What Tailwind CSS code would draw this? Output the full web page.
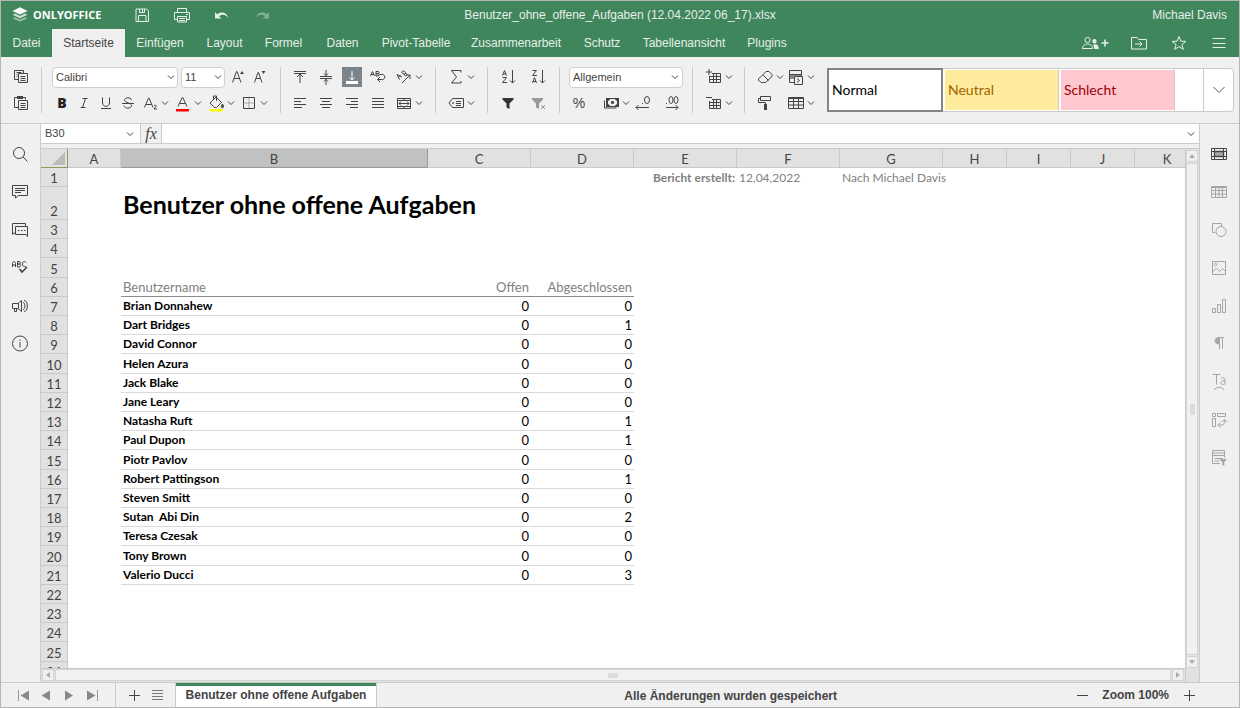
<!DOCTYPE html>
<html lang="de">
<head>
  <meta charset="UTF-8">
  <meta name="viewport" content="width=device-width, initial-scale=1">
  <title>Benutzer_ohne_offene_Aufgaben (12.04.2022 06_17).xlsx</title>
  <script src="https://cdn.jsdelivr.net/npm/@tailwindcss/browser@4"></script>
</head>
<body class="h-screen flex flex-col overflow-hidden border border-[#b5b5b5] bg-[#f0f0f0] text-[#444] text-xs font-['Liberation_Sans',Arial,sans-serif]">

  <!-- Header -->
  <header class="shrink-0 bg-[#40865c] text-[#e6efe9]">
    <div class="grid grid-cols-[1fr_auto_1fr] items-center h-7">
      <div class="flex items-center">
        <div class="flex items-center gap-[3px] w-[131px] pl-[9px] text-[11px] font-['Open_Sans',sans-serif] font-bold text-white">
          <svg class="w-5 h-5" viewBox="0 0 20 20">
            <path d="M2.500 13.300 5 12.200 10 14.500 15 12.200 17.500 13.300 10 16.800z" fill="#fff" opacity=".45"/>
            <path d="M2.500 9.700 5 8.600 10 10.900 15 8.600 17.500 9.700 10 13.200z" fill="#fff" opacity=".75"/>
            <path d="M10 2.300 17.500 5.900 10 9.500 2.500 5.900z" fill="#fff"/>
          </svg>
          <span>ONLYOFFICE</span>
        </div>
        <div class="flex gap-5">
          <button data-icon="save" aria-label="Speichern" class="w-5 h-5"></button>
          <button data-icon="print" aria-label="Drucken" class="w-5 h-5"></button>
          <button data-icon="undo" aria-label="Rückgängig" class="w-5 h-5"></button>
          <button data-icon="redo" aria-label="Wiederholen" class="w-5 h-5 opacity-40"></button>
        </div>
      </div>
      <h1>Benutzer_ohne_offene_Aufgaben (12.04.2022 06_17).xlsx</h1>
      <div class="text-right pr-3">Michael Davis</div>
    </div>
    <div class="flex justify-between h-7">
      <nav class="flex whitespace-nowrap">
        <button class="w-[51px]">Datei</button>
        <button class="w-[73px] bg-[#f0f0f0] text-[#444]">Startseite</button>
        <button class="w-[70px]">Einfügen</button>
        <button class="w-[59px]">Layout</button>
        <button class="w-[59px]">Formel</button>
        <button class="w-[59px]">Daten</button>
        <button class="w-[88px]">Pivot-Tabelle</button>
        <button class="w-[112px]">Zusammenarbeit</button>
        <button class="w-[60px]">Schutz</button>
        <button class="w-[104px]">Tabellenansicht</button>
        <button class="w-[62px]">Plugins</button>
      </nav>
      <div class="flex items-center gap-5 pr-[10px]">
        <button data-icon="share" aria-label="Freigeben" class="w-7 h-5"></button>
        <button data-icon="folder" aria-label="Dateispeicherort öffnen" class="w-5 h-5"></button>
        <button data-icon="star" aria-label="Favorit" class="w-5 h-5"></button>
        <button data-icon="menu" aria-label="Ansichtseinstellungen" class="w-5 h-5"></button>
      </div>
    </div>
  </header>

  <!-- Toolbar -->
  <div class="shrink-0 flex py-[10px] h-[67px] border-b border-[#cbcbcb]">
    <div class="flex flex-col gap-[6px] items-center w-10 shrink-0">
      <button data-icon="copy" aria-label="Kopieren" class="w-5 h-5"></button>
      <button data-icon="paste" aria-label="Einfügen" class="w-5 h-5"></button>
    </div>
    <div class="flex flex-col gap-[5px] w-[239px] pl-[10px] shrink-0 border-l border-[#cbcbcb]">
      <div class="flex gap-[3px]">
        <div class="relative w-[126px]">
          <select aria-label="Schriftart" class="appearance-none w-full h-[21px] pl-[3px] text-[11px] bg-white border border-[#cfcfcf] rounded-sm"><option>Calibri</option></select>
          <span data-icon="chevron" class="absolute right-[2px] top-0 w-[10px] h-5 pointer-events-none"></span>
        </div>
        <div class="relative w-11">
          <select aria-label="Schriftgrad" class="appearance-none w-full h-[21px] pl-[3px] text-[11px] bg-white border border-[#cfcfcf] rounded-sm"><option>11</option></select>
          <span data-icon="chevron" class="absolute right-[2px] top-0 w-[10px] h-5 pointer-events-none"></span>
        </div>
        <button data-icon="grow" aria-label="Schrift vergrößern" class="w-5 h-5"></button>
        <button data-icon="shrink" aria-label="Schrift verkleinern" class="w-5 h-5"></button>
      </div>
      <div class="flex gap-[3px]">
        <div class="flex gap-[2px]">
          <button aria-label="Fett" class="w-5 h-5 font-['Open_Sans',sans-serif] font-extrabold text-sm leading-5 text-[#222]">B</button>
          <button data-icon="italic" aria-label="Kursiv" class="w-5 h-5"></button>
          <button data-icon="underline" aria-label="Unterstrichen" class="w-5 h-5"></button>
          <button data-icon="strike" aria-label="Durchgestrichen" class="w-5 h-5"></button>
          <button data-icon="subscript" data-menu aria-label="Tiefgestellt" class="flex h-5"></button>
        </div>
        <button data-icon="fontcolor" data-menu aria-label="Schriftfarbe" class="flex h-5"></button>
        <button data-icon="fill" data-menu aria-label="Füllfarbe" class="flex h-5"></button>
        <button data-icon="borders" data-menu aria-label="Rahmen" class="flex h-5"></button>
      </div>
    </div>
    <div class="flex flex-col gap-[6px] w-[155px] pl-[9px] shrink-0 border-l border-[#cbcbcb]">
      <div class="flex gap-[6px]">
        <button data-icon="top" aria-label="Oben ausrichten" class="w-5 h-5"></button>
        <button data-icon="middle" aria-label="Zentriert ausrichten" class="w-5 h-5"></button>
        <button data-icon="bottom" aria-label="Unten ausrichten" class="w-5 h-5 bg-[#7d858c] text-white"></button>
        <button data-icon="wrap" aria-label="Textumbruch" class="w-5 h-5"></button>
        <button data-icon="orient" data-menu aria-label="Ausrichtung" class="flex h-5"></button>
      </div>
      <div class="flex gap-[6px]">
        <button data-icon="left" aria-label="Linksbündig" class="w-5 h-5"></button>
        <button data-icon="center" aria-label="Zentriert" class="w-5 h-5"></button>
        <button data-icon="right" aria-label="Rechtsbündig" class="w-5 h-5"></button>
        <button data-icon="justify" aria-label="Blocksatz" class="w-5 h-5"></button>
        <button data-icon="merge" data-menu aria-label="Verbinden und zentrieren" class="flex h-5"></button>
      </div>
    </div>
    <div class="flex flex-col gap-[6px] w-[52px] pl-[10px] shrink-0 border-l border-[#cbcbcb]">
      <button data-icon="sum" data-menu aria-label="Summe" class="flex h-5"></button>
      <button data-icon="named" data-menu aria-label="Benannte Bereiche" class="flex h-5"></button>
    </div>
    <div class="grid grid-cols-[20px_20px] content-start gap-x-[10px] gap-y-[6px] w-[72px] pl-[10px] shrink-0 border-l border-[#cbcbcb]">
      <button data-icon="az" aria-label="Aufsteigend sortieren" class="w-5 h-5"></button>
      <button data-icon="za" aria-label="Absteigend sortieren" class="w-5 h-5"></button>
      <button data-icon="filter" aria-label="Filter" class="w-5 h-5"></button>
      <button data-icon="clearfilter" aria-label="Filter löschen" class="w-5 h-5 opacity-50"></button>
    </div>
    <div class="flex flex-col gap-[5px] w-[133px] pl-[9px] shrink-0 border-l border-[#cbcbcb]">
      <div class="relative w-[114px]">
        <select aria-label="Zahlenformat" class="appearance-none w-full h-[21px] pl-[3px] text-[11px] bg-white border border-[#cfcfcf] rounded-sm"><option>Allgemein</option></select>
        <span data-icon="chevron" class="absolute right-[3px] top-0 w-[10px] h-5 pointer-events-none"></span>
      </div>
      <div class="flex">
        <button aria-label="Prozent" class="w-8 h-5 pr-3 text-sm leading-5">%</button>
        <button data-icon="money" data-menu aria-label="Währung" class="flex h-5 mr-[2px]"></button>
        <button data-icon="decless" aria-label="Dezimale verringern" class="w-5 h-5 mr-[9px]"></button>
        <button data-icon="decmore" aria-label="Dezimale erhöhen" class="w-5 h-5"></button>
      </div>
    </div>
    <div class="flex flex-col gap-[6px] w-[52px] pl-[11px] shrink-0 border-l border-[#cbcbcb]">
      <button data-icon="addcell" data-menu aria-label="Zellen einfügen" class="flex h-5"></button>
      <button data-icon="delcell" data-menu aria-label="Zellen löschen" class="flex h-5"></button>
    </div>
    <div class="grid grid-cols-[30px_30px] content-start gap-x-[1px] gap-y-[6px] w-[83px] pl-[10px] shrink-0 border-l border-[#cbcbcb]">
      <button data-icon="eraser" data-menu aria-label="Löschen" class="flex h-5"></button>
      <button data-icon="condformat" data-menu aria-label="Bedingte Formatierung" class="flex h-5"></button>
      <button data-icon="painter" aria-label="Format übertragen" class="w-5 h-5"></button>
      <button data-icon="tablefmt" data-menu aria-label="Als Tabelle formatieren" class="flex h-5"></button>
    </div>
    <div class="flex flex-1 min-w-0 h-11 mt-px mr-[5px] bg-white border border-[#cbcbcb] rounded-sm font-['Lato',sans-serif] text-sm">
      <button class="w-[116px] shrink-0 -m-px mr-0 border-2 border-[#848484] pl-[3px] text-left text-black">Normal</button>
      <button class="w-[116px] shrink-0 border border-l-2 border-white border-r-[#cbcbcb] bg-[#ffeb9c] bg-clip-padding pl-[3px] text-left text-[#9c6500]">Neutral</button>
      <button class="w-[116px] shrink-0 border border-l-2 border-white border-r-[#cbcbcb] bg-[#ffc7ce] bg-clip-padding pl-[3px] text-left text-[#9c0006]">Schlecht</button>
      <div class="flex-1"></div>
      <button aria-label="Weitere Formatvorlagen" class="w-[30px] border-l border-[#cbcbcb] flex items-center justify-center">
        <svg class="w-3 h-2 fill-none stroke-[#555]" viewBox="0 0 12 8"><path d="M.5 1 6 6.500 11.500 1"/></svg>
      </button>
    </div>
  </div>

  <div class="flex flex-1 min-h-0">
    <!-- Left panel -->
    <aside class="w-10 shrink-0 flex flex-col items-center pt-[11px] pr-px border-r border-[#cbcbcb]">
      <button data-icon="search" aria-label="Suchen" class="w-5 h-[38px]"></button>
      <button data-icon="comment" aria-label="Kommentare" class="w-5 h-[38px]"></button>
      <button data-icon="chat" aria-label="Chat" class="w-5 h-[38px]"></button>
      <button data-icon="spell" aria-label="Rechtschreibprüfung" class="w-5 h-[38px]"></button>
      <button data-icon="feedback" aria-label="Feedback und Support" class="w-5 h-[38px]"></button>
      <button data-icon="info" aria-label="Über das Produkt" class="w-5 h-[38px]"></button>
    </aside>

    <main class="flex-1 min-w-0 flex flex-col">
      <!-- Formula bar -->
      <div class="flex h-5 shrink-0 bg-white border-b border-[#cbcbcb] text-[11px]">
        <input aria-label="Namenfeld" value="B30" class="w-[84px] pl-1 outline-none">
        <button data-icon="chevron" aria-label="Namen auswählen" class="w-[10px] mr-[5px]"></button>
        <button aria-label="Funktion einfügen" class="w-[22px] bg-[#f0f0f0] border-x border-[#cbcbcb] font-['Liberation_Serif',serif] italic text-base leading-4">fx</button>
        <input aria-label="Formel" class="flex-1 min-w-0 outline-none">
        <button data-icon="chevron" aria-label="Formelleiste erweitern" class="w-[10px] mr-[3px]"></button>
      </div>

      <div class="flex flex-1 min-h-0 mt-1 border-t border-[#cbcbcb]">
        <div class="flex-1 min-w-0 flex flex-col">
          <!-- Sheet -->
          <div class="flex-1 min-h-0 overflow-hidden bg-white">
            <table class="table-fixed w-[1159px] border-separate border-spacing-0 font-['Lato','Noto_Sans',sans-serif] text-[13px] leading-4 text-black">
              <thead>
                <tr id="columns" class="h-[19px] text-[#444]"></tr>
              </thead>
              <tbody id="rows"></tbody>
            </table>
          </div>
          <!-- Horizontal scrollbar -->
          <div class="flex h-[14px] shrink-0 border-t border-[#cbcbcb] bg-[#e1e1e1] pl-px gap-px">
            <button aria-label="Nach links" class="w-3 h-3 bg-[#f0f0f0] border border-[#d4d4d4] flex items-center justify-center"><svg class="w-1 h-[6px] fill-[#aaa]" viewBox="0 0 4 6"><path d="M4 0v6L0 3z"/></svg></button>
            <div class="flex-1 h-3 bg-[#f1f1f1] border border-[#d4d4d4] flex items-center justify-center"><span class="w-[10px] h-[5px] bg-[#dcdcdc]"></span></div>
            <button aria-label="Nach rechts" class="w-3 h-3 bg-[#f0f0f0] border border-[#d4d4d4] flex items-center justify-center mr-px"><svg class="w-1 h-[6px] fill-[#aaa]" viewBox="0 0 4 6"><path d="M0 0v6l4-3z"/></svg></button>
          </div>
        </div>
        <!-- Vertical scrollbar -->
        <div class="flex flex-col w-[14px] shrink-0 border-l border-[#cbcbcb] bg-[#e1e1e1] pt-px pb-[14px] gap-px">
          <button aria-label="Nach oben" class="w-3 h-3 bg-[#f0f0f0] border border-[#d4d4d4] flex items-center justify-center"><svg class="w-[6px] h-1 fill-[#aaa]" viewBox="0 0 6 4"><path d="M0 4h6L3 0z"/></svg></button>
          <div class="flex-1 w-3 bg-[#f1f1f1] border border-[#d4d4d4] flex items-center justify-center"><span class="w-[5px] h-[11px] bg-[#dcdcdc]"></span></div>
          <button aria-label="Nach unten" class="w-3 h-3 bg-[#f0f0f0] border border-[#d4d4d4] flex items-center justify-center"><svg class="w-[6px] h-1 fill-[#aaa]" viewBox="0 0 6 4"><path d="M0 0h6L3 4z"/></svg></button>
        </div>
      </div>
    </main>

    <!-- Right panel -->
    <aside class="w-10 shrink-0 flex flex-col items-center pt-[11px] pr-px border-l border-[#cbcbcb] text-[#a5a5a5]">
      <button data-icon="cell" aria-label="Zelleneinstellungen" class="w-5 h-[38px] text-[#444]"></button>
      <button data-icon="table" aria-label="Tabelleneinstellungen" class="w-5 h-[38px]"></button>
      <button data-icon="shape" aria-label="Formeinstellungen" class="w-5 h-[38px]"></button>
      <button data-icon="image" aria-label="Bildeinstellungen" class="w-5 h-[38px]"></button>
      <button data-icon="chart" aria-label="Diagrammeinstellungen" class="w-5 h-[38px]"></button>
      <button data-icon="paragraph" aria-label="Absatzeinstellungen" class="w-5 h-[38px]"></button>
      <button data-icon="textart" aria-label="TextArt-Einstellungen" class="w-5 h-[38px]"></button>
      <button data-icon="pivot" aria-label="Pivot-Tabelleneinstellungen" class="w-5 h-[38px]"></button>
      <button data-icon="slicer" aria-label="Datenschnitteinstellungen" class="w-5 h-[38px]"></button>
    </aside>
  </div>

  <!-- Status bar -->
  <footer class="shrink-0 flex h-[25px] border-t border-[#cbcbcb] font-bold">
    <div class="flex items-center gap-[3px] w-[115px] pl-3 border-r border-[#cbcbcb]">
      <button data-icon="first" aria-label="Erstes Blatt" class="w-5 h-5"></button>
      <button data-icon="prev" aria-label="Vorheriges Blatt" class="w-5 h-5"></button>
      <button data-icon="next" aria-label="Nächstes Blatt" class="w-5 h-5"></button>
      <button data-icon="last" aria-label="Letztes Blatt" class="w-5 h-5"></button>
    </div>
    <div class="flex items-center gap-[3px] pl-2 pr-2">
      <button data-icon="plus" aria-label="Blatt hinzufügen" class="w-5 h-5"></button>
      <button data-icon="list" aria-label="Liste der Blätter" class="w-5 h-5"></button>
    </div>
    <button class="w-[202px] bg-white border-x border-[#cbcbcb] shadow-[inset_0_3px_#40865c] font-bold">Benutzer ohne offene Aufgaben</button>
    <div class="flex-1 flex items-center justify-center pt-px pl-3">Alle Änderungen wurden gespeichert</div>
    <div class="flex items-center gap-[10px] pr-10">
      <button data-icon="minus" aria-label="Verkleinern" class="w-5 h-5"></button>
      <span>Zoom 100%</span>
      <button data-icon="plus" aria-label="Vergrößern" class="w-5 h-5"></button>
    </div>
  </footer>

  <script>
    // 20x20 drawings, stroked with the current text colour
    const icons = {
      chevron: '<path d="m7 8.500 3 3 3-3"/>',
      save: '<path d="M4 4h10.500L16.500 6v10.500H4zM6.500 16.500v-6h7.500v6M7.500 4v3.500h5V4M10.500 4v3"/>',
      print: '<path d="M5.500 7.500v-4h9v4M5.500 14.500h-3v-7h15v7h-3M5.500 11.500h9v5.500h-9zM7 13.500h6M7 15.500h6M14 9.500h2"/>',
      undo: '<path d="M3 7v6.500h6.500L7 11.200C9.500 8.800 13.500 9 16.500 13 15 7.500 9.500 5.800 5.200 9.200z" fill="currentColor" stroke="none"/>',
      redo: '<path d="M17 7v6.500h-6.500L13 11.200C10.500 8.800 6.500 9 3.500 13 5 7.500 10.500 5.800 14.800 9.200z" fill="currentColor" stroke="none"/>',
      share: '<circle cx="6.500" cy="7" r="2.600"/><path d="M1.500 15.500c0-6 10-6 10 0z"/><path d="M13 16c0-2 0-3-1.200-4 3-1.600 6-.5 6 4zM13.500 6a2.200 2.200 0 1 1 0 4.400 2.200 2.200 0 0 1 0-4.400z" fill="currentColor" stroke="none"/><path d="M20.500 10h7M24 6.500v7" stroke-width="1.600"/>',
      folder: '<path d="M2.500 16V4.500H8l1.500 2h8V16zM6 11h7M10.500 8.500 13 11l-2.500 2.500"/>',
      star: '<path d="m10 3.500 1.800 4.700 5 .2-3.900 3.100 1.400 4.900-4.300-2.800-4.300 2.800 1.400-4.900-3.900-3.100 5-.2z"/>',
      menu: '<path d="M3.500 5.500h13M3.500 10.500h13M3.500 14.500h13"/>',
      copy: '<path d="M7.500 12.500h-4v-9h9v3M5.500 5.500h5M5.500 7.500h1M5.500 9.500h1M7.500 6.500h9v9h-9zM9.500 9.500h5M9.500 11.500h5M9.500 13.500h5"/>',
      paste: '<path d="M7.500 14.500h-4v-10h11v2M6.500 3.500h5" /><path d="M6 3h6v3H6z" fill="currentColor" stroke="none"/><path d="M7.500 7.500h9v9h-9zM9.500 10.500h5M9.500 12.500h5M9.500 14.500h5"/>',
      grow: '<path d="m4.500 15.500 4-11h.5l4 11M6 11.500h5.500"/><path d="M12 7l2-3 2 3z" fill="currentColor" stroke="none"/>',
      shrink: '<path d="m3.500 15.500 3.500-10h.5l3.500 10M5 11.500h5"/><path d="M10.500 4l2 3 2-3z" fill="currentColor" stroke="none"/>',
      italic: '<path d="M8.500 5.500h5M6.500 14.500h5M11.500 5.500l-3 9"/>',
      underline: '<path d="M6.500 4.500V10c0 4.500 7 4.500 7 0V4.500M5 15.500h10"/>',
      strike: '<path d="M13.500 7c-.5-3-7-3-7 .3 0 2.200 7 2.700 7 5.200 0 3.500-7 3.500-7.500.2M4 10.500h12"/>',
      subscript: '<path d="m4.500 14.500 4-9.500h.5l4 9.500M6 11.500h5.500M14 13c.5-1.500 2.500-1 2 .5l-2 2.500h3"/>',
      fontcolor: '<path d="m5 13.500 4.300-9h.5l4.200 9M6.500 10.500h6"/><path d="M3 16h13v2.500H3z" fill="#f00" stroke="none"/>',
      fill: '<path d="m4 10 6-6 5.500 5.500-5 5h-2zM7.500 6.500V3h3v5"/><path d="M16.500 11c2 2.500 0 4 0 4-2.500-1 0-4 0-4z" fill="currentColor"/><path d="M4 16h13v2.500H4z" fill="#ff0" stroke="none"/>',
      borders: '<path d="M4.500 4.500h11v11h-11z"/><path d="M10 5v10M5 10h10" opacity=".4"/>',
      top: '<path d="M4 4.500h12M4 6.500h12M10 7v9M7 10l3-3 3 3"/>',
      middle: '<path d="M4 9.500h12M4 11.500h12M10 3v6M8 6.500l2 2 2-2M10 18v-6M8 14.500l2-2 2 2"/>',
      bottom: '<path d="M10 4v9M7.500 10.500 10 13l2.500-2.500M4 14.500h12M4 16.500h12M4 15.500h12"/>',
      wrap: '<path d="M2.500 9 4.500 4.500 6.500 9M3.300 7.500h2.500M8 4.500V9h2c1.700 0 1.700-2.300 0-2.300H8h2c1.500 0 1.500-2.200 0-2.200zM12 7.500h2.500c3 0 3 5 0 5H9.500M12 10l-2.500 2.500L12 15"/>',
      orient: '<path d="m5.500 12.500-2.500-5 5 2.500M4.500 10.500l2-2M7.500 5l4 4c2-.5 2-2.500 0-2.500.5-2-2-3.500-4-1.500zM9.500 7l2-.5M8 16l8-8M12 8h4v4"/>',
      left: '<path d="M4 5.500h12M4 8.500h7M4 11.500h12M4 14.500h8"/>',
      center: '<path d="M4 5.500h12M6 8.500h8M4 11.500h12M6 14.500h8"/>',
      right: '<path d="M4 5.500h12M9 8.500h7M4 11.500h12M8 14.500h8"/>',
      justify: '<path d="M4 5.500h12M4 8.500h12M4 11.500h12M4 14.500h12"/>',
      merge: '<path d="M3.500 5.500h13v10h-13zM3.500 7.500h13M3.500 13.500h13M10 5v2M10 13.500v2M5 10.500h10M7 8.500l-2 2 2 2M13 8.500l2 2-2 2"/>',
      sum: '<path d="M15 5.500v-2H5.500l5 6.500-5 6H15v-2"/>',
      named: '<path d="M6.500 5.500h11v9h-11L3 10zM10 8.500h5M10 10.500h5M10 12.500h5"/><circle cx="7" cy="10" r=".5"/>',
      az: '<path d="M4.500 8.500 6.500 3.500 8.500 8.500M5 7h3M4.500 10.500h4l-4 5h4.500M14.500 3v13M12 13.500l2.500 2.500 2.500-2.500"/>',
      za: '<path d="M4.500 3.500h4l-4 5h4.500M4.500 16 6.500 10.500 8.500 16M5 14.500h3M14.500 3v13M12 13.500l2.500 2.500 2.500-2.500"/>',
      filter: '<path d="M4.500 5h11v1.500l-4 4V16l-3-1.500v-4l-4-4z" fill="#333" stroke="none"/>',
      clearfilter: '<path d="M4 5h11v1.500l-4 4V16l-3-1.500v-4l-4-4z" fill="currentColor" stroke="none"/><path d="m13 12 4 4M17 12l-4 4"/>',
      money: '<path d="M5.500 5.500h12v8h-12zM3.500 7.500v7.500h12"/><path d="M5 5h4v1.500L7 8v3L9 12.500V14H5zM18 5h-4v1.500L16 8v3L14 12.500V14h4z" fill="currentColor" stroke="none"/><circle cx="11.500" cy="9.500" r="1.200" fill="currentColor"/>',
      decless: '<ellipse cx="14" cy="7" rx="2.500" ry="3.500"/><path d="M9 10.500h1M3 14.500h13M5.500 12 3 14.500 5.500 17"/>',
      decmore: '<ellipse cx="9" cy="7" rx="2" ry="3.500"/><ellipse cx="14" cy="7" rx="2" ry="3.500"/><path d="M4 10.500h1M4 14.500h12M13.500 12l2.500 2.500-2.500 2.500"/>',
      addcell: '<path d="M5 2v6M2 5h6M8 6.500h8.500v9h-11V9M5.500 9.500h11M5.500 12.500h11M9.500 6.500v9M12.500 6.500v9"/>',
      delcell: '<path d="M2 4.500h6M8 6.500h8.500v9h-11V8M5.500 9.500h11M5.500 12.500h11M9.500 6.500v9M12.500 6.500v9"/>',
      eraser: '<path d="m3.500 12 7.500-7.500h3l3 3v2l-6.500 6h-4l-3-2zM8 8l5.500 5.500"/>',
      condformat: '<path d="M3.500 3.500h12v4h-12zM3.500 7.500v8h5M15.500 7.500v2M8.500 9.500h8v8h-8zM11 11.500l2.500 2-2.500 2"/><path d="M4 7h12v2.500H8V12H4z" fill="currentColor" opacity=".6" stroke="none"/>',
      painter: '<path d="M5.500 3.500h10v4h-10zM5.500 5.500h-2v4h7v2"/><path d="M9 11h3v6H9z" fill="currentColor" stroke="none"/>',
      tablefmt: '<path d="M2.500 4.500h15v11h-15zM2.500 5.500h15M2.500 8.500h15M2.500 12h15M7.500 5v10.500M12.500 5v10.500"/>',
      search: '<circle cx="9" cy="9" r="5.500"/><path d="m13 13 4.500 4.500"/>',
      comment: '<path d="M2.500 3.500h15v10h-9L5.500 16v-2.500h-3zM5 6.500h10M5 8.500h10M5 10.500h6"/>',
      chat: '<path d="M5.500 13H4L2.500 14.500v-11h13v3M5.500 6.500h12v10L16 14.500H5.500zM8 10.500h1.500M11 10.500h1.500M14 10.500h1.500"/>',
      spell: '<path d="M2.500 9V5.500c0-2.500 3-2.500 3 0V9M2.500 7h3M7.500 3.500V9h1.700c1.900 0 1.900-3 0-3H7.500h1.700c1.700 0 1.700-2.500 0-2.500zM16 4.500c-1-1.500-3.500-1.500-3.500 1.500S15 9 16 8"/><path d="m9.500 11 2.500 3 5-5" stroke-width="1.600"/>',
      feedback: '<path d="M11.500 4.500v11L8 12.500H2.500v-5H8zM4.500 12.500v3h2v-3M8.500 7.500v5M13 6.500c2.500 0 2.500 7 0 7M14 4.500c4.500 0 4.500 11 0 11"/>',
      info: '<circle cx="10" cy="9.500" r="7.500"/><path d="M10 8v5.500M10 5.500v1.300"/>',
      cell: '<path d="M2.500 4.500h15v11h-15zM2.500 7.500h15M2.500 12.500h15M5.500 4.500v11M14.500 4.500v11"/><path d="M5.500 7.500h9v5h-9z" fill="#aaa" stroke-width="1.300"/>',
      table: '<path d="M2.500 4.500h15v11h-15zM2.500 5.500h15M2.500 8.500h15M2.500 12h15M6.500 5v10.500M10 5v10.500M13.500 5v10.500"/>',
      shape: '<path d="M6 12.500H3.500v-9h9V6"/><circle cx="12" cy="11.500" r="5"/>',
      image: '<path d="M3.500 3.500h13v13h-13zM3.500 14l4-4 3 3.500 3-3 3 3"/><circle cx="6.500" cy="6.500" r="1.200"/>',
      chart: '<path d="M3.500 12.500h3v4h-3zM8.500 8.500h3v8h-3zM13.500 3.500h3v13h-3z"/>',
      paragraph: '<path d="M10.500 4v11M13.500 4v11M9 3.500h6"/><path d="M10.500 3.500V10C4.500 10 4.500 3.500 10.500 3.500z" fill="currentColor"/>',
      textart: '<path d="M3.500 2.500h8M7.500 2.500v10M12 6.500c2-1.500 4-.5 4 1v5M16 8.500c-5 0-5 4-2.500 4 1.500 0 2.500-1 2.500-1M5 18c2.500-3.500 7.500-3.500 10 0"/>',
      pivot: '<path d="M3.500 3.500h3v3h-3zM8.500 3.500h8v3h-8zM3.500 8.500h3v8h-3zM9.500 15h3.500c2 0 2.500-2 2.500-5M13 12l2.500-2.500L18 12M11.500 12.500 9 15l2.500 2.500"/>',
      slicer: '<path d="M11 15.500H3.500v-13h12v7M3.500 5h12M5.500 7.500h8M5.500 10.500h8M5.500 13h5M3.500 7.500h12"/><path d="M10.500 11h7.500l-2.700 3v4l-2-1v-3z" fill="currentColor" stroke="none"/>',
      first: '<path d="M5.500 5v11" stroke="#999"/><path d="M16 5.500v10L7.500 10.500z" fill="#888" stroke="none"/>',
      prev: '<path d="M14 5.500v10L5.500 10.500z" fill="#888" stroke="none"/>',
      next: '<path d="M6 5.500v10l8-5z" fill="#888" stroke="none"/>',
      last: '<path d="M15.500 5v11" stroke="#999"/><path d="M5 5.500v10l8.500-5z" fill="#888" stroke="none"/>',
      plus: '<path d="M10.500 5v11M5 10.500h11"/>',
      minus: '<path d="M5 10.500h11"/>',
      list: '<path d="M5 5.500h11M5 8.500h11M5 11.500h11M5 14.500h11" stroke="#777"/>'
    };

    const draw = (name, box, size) =>
      `<svg class="${size} fill-none stroke-current" viewBox="${box}">${icons[name]}</svg>`;

    document.querySelectorAll('[data-icon]').forEach(el => {
      const name = el.dataset.icon;
      if (name === 'chevron') {
        el.innerHTML = draw(name, '5 0 10 20', 'w-[10px] h-5');
      } else if (name === 'share') {
        el.innerHTML = draw(name, '0 0 28 20', 'w-7 h-5');
      } else {
        el.innerHTML = draw(name, '0 0 20 20', 'w-5 h-5');
      }
      if ('menu' in el.dataset) el.innerHTML += draw('chevron', '5 0 10 20', 'w-[10px] h-5');
    });

    const columns = [
      ['', 'w-[27px]'], ['A', 'w-[53px]'], ['B', 'w-[307px]'], ['C', 'w-[103px]'],
      ['D', 'w-[103px]'], ['E', 'w-[103px]'], ['F', 'w-[103px]'], ['G', 'w-[103px]'],
      ['H', 'w-[64px]'], ['I', 'w-[64px]'], ['J', 'w-[64px]'], ['K', 'w-[65px]']
    ];
    document.getElementById('columns').innerHTML = columns.map(([name, width]) => {
      if (!name) return `<td class="${width} h-[19px] p-0 bg-[#e1e1e1] border-r border-b border-[#8a9a5b]"><svg class="block ml-auto mr-[2px] w-[13px] h-[13px] fill-[#bbb]" viewBox="0 0 13 13"><path d="M13 0v13H0z"/></svg></td>`;
      const look = name === 'B' ? 'bg-[#c1c1c1] border-[#9a9a9a]' : 'bg-[#e1e1e1] border-[#c9c9c9]';
      return `<th scope="col" class="${width} h-[19px] p-0 pt-px font-normal border-r border-b ${look}">${name}</th>`;
    }).join('');

    const users = [
      ['Brian Donnahew', 0, 0], ['Dart Bridges', 0, 1], ['David Connor', 0, 0],
      ['Helen Azura', 0, 0], ['Jack Blake', 0, 0], ['Jane Leary', 0, 0],
      ['Natasha Ruft', 0, 1], ['Paul Dupon', 0, 1], ['Piotr Pavlov', 0, 0],
      ['Robert Pattingson', 0, 1], ['Steven Smitt', 0, 0], ['Sutan  Abi Din', 0, 2],
      ['Teresa Czesak', 0, 0], ['Tony Brown', 0, 0], ['Valerio Ducci', 0, 3]
    ];

    const cells = n => {
      if (n === 1) {
        return `<td colspan="4"></td>
          <td class="p-0 pr-[2px] text-right text-xs font-bold text-[#7f7f7f] whitespace-nowrap">Bericht erstellt:</td>
          <td class="p-0 pl-[2px] text-xs text-[#7f7f7f]">12,04,2022</td>
          <td colspan="2" class="p-0 pl-[2px] text-xs text-[#7f7f7f]">Nach Michael Davis</td><td colspan="3"></td>`;
      }
      if (n === 2) {
        return `<td></td><td colspan="2" class="p-0 pl-[2px] text-[25px] leading-8 font-bold whitespace-nowrap">Benutzer ohne offene Aufgaben</td><td colspan="8"></td>`;
      }
      if (n === 6) {
        return `<td></td>
          <td class="p-0 pl-[2px] text-[#7f7f7f] border-b border-[#8c8c8c]">Benutzername</td>
          <td class="p-0 pr-[2px] text-right text-[#7f7f7f] border-b border-[#8c8c8c]">Offen</td>
          <td class="p-0 pr-[2px] text-right text-[#7f7f7f] border-b border-[#8c8c8c]">Abgeschlossen</td><td colspan="7"></td>`;
      }
      const user = users[n - 7];
      if (!user) return '<td colspan="11"></td>';
      return `<td></td>
        <td class="p-0 pl-[2px] text-xs font-bold whitespace-pre border-b border-[#d9d9d9]">${user[0]}</td>
        <td class="p-0 pr-[2px] text-right border-b border-[#d9d9d9]">${user[1]}</td>
        <td class="p-0 pr-[2px] text-right border-b border-[#d9d9d9]">${user[2]}</td><td colspan="7"></td>`;
    };

    let html = '';
    for (let n = 1; n <= 26; n++) {
      const height = n === 2 ? 'h-[33px]' : n % 5 === 0 ? 'h-[20px]' : 'h-[19px]';
      html += `<tr class="${height}"><th scope="row" class="p-0 font-normal text-[#444] align-bottom bg-[#e1e1e1] border-r border-b border-[#c9c9c9]">${n}</th>${cells(n)}</tr>`;
    }
    document.getElementById('rows').innerHTML = html;
  </script>
</body>
</html>
